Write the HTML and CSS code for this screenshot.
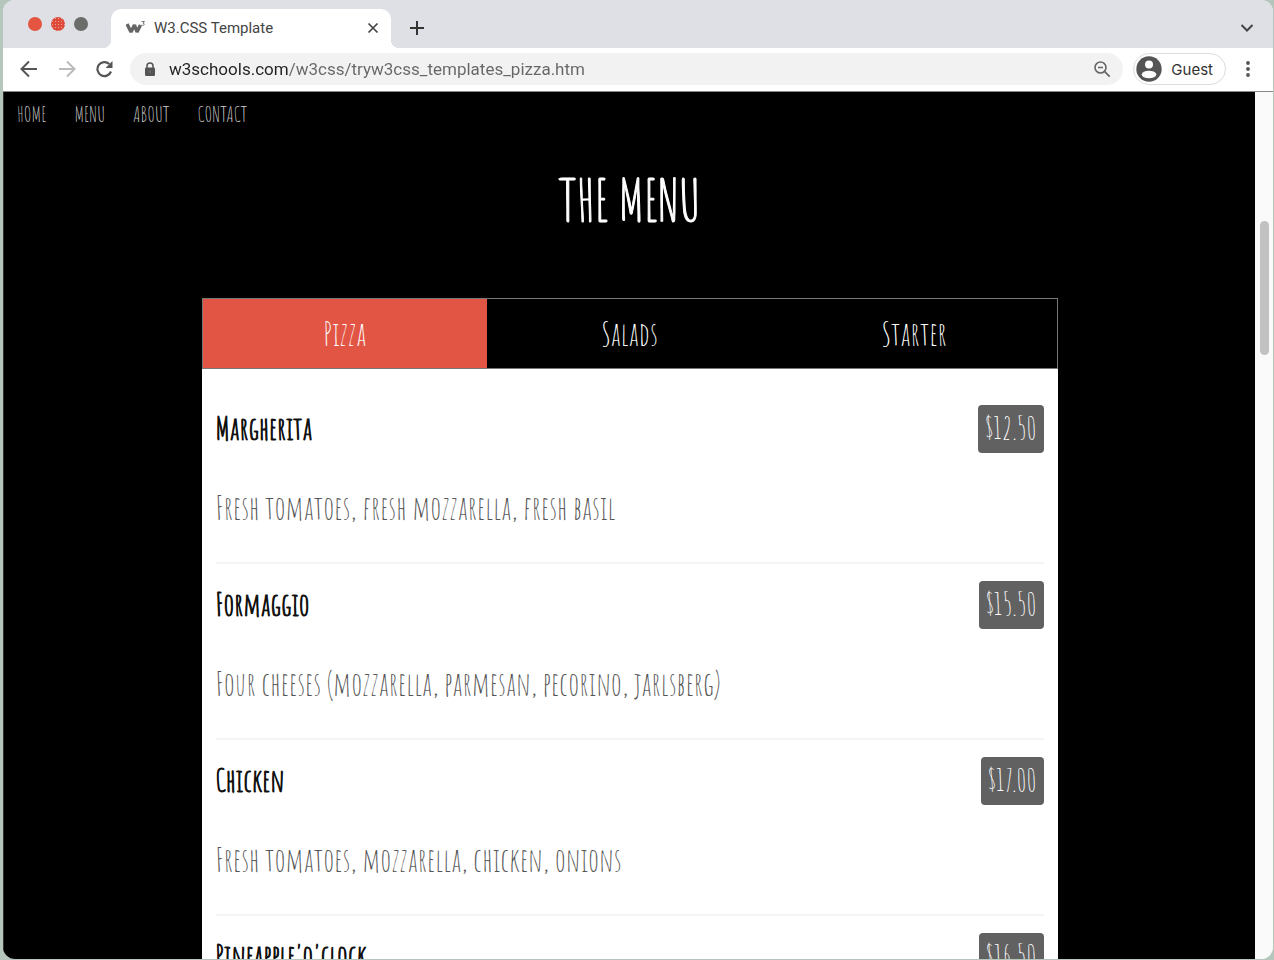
FILE: index.html
```html
<!DOCTYPE html>
<html lang="en">
<head>
<meta charset="utf-8">
<meta name="viewport" content="width=device-width, initial-scale=1">
<title>W3.CSS Template</title>
<link rel="stylesheet" href="styles.css">
</head>
<body>
<div class="window">
  <header class="tab-strip">
    <div class="lights">
      <button class="light" aria-label="Close window"></button>
      <button class="light light-dotted" aria-label="Minimize window"></button>
      <button class="light light-gray" aria-label="Zoom window"></button>
    </div>
    <div class="browser-tab">
      <svg class="favicon" viewBox="0 0 20 16" aria-hidden="true">
        <path d="M1 4 L5 12 L8.500 5 L11 12 L14.500 5" fill="none" stroke="#666" stroke-width="3.400" stroke-linejoin="bevel"/>
        <path d="M15.500 1.500 h3 l-1.500 1.700 c2.200 0 1.800 2.800 -1.500 1.900" fill="none" stroke="#777" stroke-width="1"/>
      </svg>
      <span class="tab-title">W3.CSS Template</span>
      <button class="icon-button close-tab" aria-label="Close tab">
        <svg width="12" height="12" viewBox="0 0 12 12"><path d="M1.500 1.500l9 9M10.500 1.500l-9 9" stroke="#444" stroke-width="1.700" fill="none"/></svg>
      </button>
    </div>
    <button class="icon-button new-tab" aria-label="New tab">
      <svg width="16" height="16" viewBox="0 0 16 16"><path d="M8 1v14M1 8h14" stroke="#333" stroke-width="2" fill="none"/></svg>
    </button>
    <button class="icon-button tab-search" aria-label="Search tabs">
      <svg width="14" height="10" viewBox="0 0 14 10"><path d="M1.500 2l5.500 5.500L12.500 2" stroke="#444" stroke-width="2" fill="none"/></svg>
    </button>
  </header>

  <div class="toolbar">
    <button class="icon-button" aria-label="Back">
      <svg width="18" height="18" viewBox="0 0 18 18"><path d="M17 9H2M9 1.500L1.500 9L9 16.500" stroke="#555" stroke-width="2" fill="none"/></svg>
    </button>
    <button class="icon-button" aria-label="Forward">
      <svg width="18" height="18" viewBox="0 0 18 18"><path d="M1 9h15M9 1.500L16.500 9L9 16.500" stroke="#bbb" stroke-width="2" fill="none"/></svg>
    </button>
    <button class="icon-button" aria-label="Reload">
      <svg width="18" height="18" viewBox="0 0 18 18"><path d="M15 11.500A7 7 0 1 1 13.300 4" stroke="#555" stroke-width="2.200" fill="none"/><path d="M16.500 1v7h-7z" fill="#555"/></svg>
    </button>
    <div class="address">
      <svg width="12" height="15" viewBox="0 0 12 15" aria-hidden="true"><rect x="1" y="5.500" width="10" height="8.500" rx="1.200" fill="#555"/><path d="M3 6V4a3 3 0 0 1 6 0v2" stroke="#555" stroke-width="1.500" fill="none"/><circle cx="6" cy="9.700" r="1" fill="#777"/></svg>
      <input class="url" type="text" aria-label="Address" value="w3schools.com/w3css/tryw3css_templates_pizza.htm">
      <button class="icon-button" aria-label="Page zoom">
        <svg width="18" height="18" viewBox="0 0 18 18"><circle cx="7.500" cy="7.500" r="5.500" stroke="#666" stroke-width="1.600" fill="none"/><path d="M5 7.500h5M11.700 11.700l5 5" stroke="#666" stroke-width="1.700" fill="none"/></svg>
      </button>
    </div>
    <button class="profile">
      <svg width="26" height="26" viewBox="0 0 26 26" aria-hidden="true"><circle cx="13" cy="13" r="12.700" fill="#555"/><circle cx="13" cy="8.500" r="4" fill="#fff"/><ellipse cx="13" cy="18.500" rx="7.300" ry="3.800" fill="#fff"/></svg>
      <span>Guest</span>
    </button>
    <button class="icon-button more" aria-label="More options">
      <svg width="6" height="18" viewBox="0 0 6 18"><circle cx="3" cy="3" r="1.900" fill="#555"/><circle cx="3" cy="9" r="1.900" fill="#555"/><circle cx="3" cy="15" r="1.900" fill="#555"/></svg>
    </button>
  </div>

  <div class="viewport">
    <main class="page">
      <nav class="site-nav">
        <a href="#home">HOME</a>
        <a href="#menu">MENU</a>
        <a href="#about">ABOUT</a>
        <a href="#contact">CONTACT</a>
      </nav>
      <section class="menu" id="menu">
        <h1 class="menu-heading">THE MENU</h1>
        <div class="menu-tabs" role="tablist">
          <button class="menu-tab menu-tab-active" role="tab" aria-selected="true">Pizza</button>
          <button class="menu-tab" role="tab" aria-selected="false">Salads</button>
          <button class="menu-tab" role="tab" aria-selected="false">Starter</button>
        </div>
        <div class="dishes" role="tabpanel">
          <article class="dish">
            <div class="dish-top"><h2 class="dish-name">Margherita</h2><span class="price">$12.50</span></div>
            <p class="dish-text">Fresh tomatoes, fresh mozzarella, fresh basil</p>
          </article>
          <article class="dish">
            <div class="dish-top"><h2 class="dish-name">Formaggio</h2><span class="price">$15.50</span></div>
            <p class="dish-text">Four cheeses (mozzarella, parmesan, pecorino, jarlsberg)</p>
          </article>
          <article class="dish">
            <div class="dish-top"><h2 class="dish-name">Chicken</h2><span class="price">$17.00</span></div>
            <p class="dish-text">Fresh tomatoes, mozzarella, chicken, onions</p>
          </article>
          <article class="dish">
            <div class="dish-top"><h2 class="dish-name">Pineapple'o'clock</h2><span class="price">$16.50</span></div>
          </article>
        </div>
      </section>
    </main>
    <div class="scrollbar"><div class="thumb"></div></div>
  </div>
</div>
</body>
</html>
```
FILE: styles.css
```css
* { box-sizing: border-box; }

body {
  margin: 0;
  height: 100vh;
  padding: 0 1px 1px 3px;
  overflow: hidden;
  background: #b5c7bd;
  font-family: Inter, Roboto, sans-serif;
}

button {
  margin: 0;
  padding: 0;
  border: 0;
  background: none;
  font: inherit;
  color: inherit;
}

svg { display: block; }

.window {
  display: flex;
  flex-direction: column;
  height: 100%;
  overflow: hidden;
  border-radius: 12px;
  background: #fff;
}

.tab-strip {
  display: flex;
  flex: none;
  align-items: center;
  height: 48px;
  padding-right: 19px;
  background: #dfe0e6;
}

.lights {
  display: flex;
  gap: 9px;
  align-self: flex-start;
  margin-top: 17px;
  padding: 0 23px 0 25px;
}

.light {
  width: 14px;
  height: 14px;
  border-radius: 50%;
  background: #e35441;
}

.light-dotted {
  background: radial-gradient(circle, #eea097 1px, transparent 1px) 0 0 / 3px 3px #de4b3b;
}

.light-gray { background: #6a6d6a; }

.browser-tab {
  position: relative;
  display: flex;
  align-items: center;
  align-self: flex-end;
  width: 280px;
  height: 39px;
  padding: 0 12px 2px 15px;
  border-radius: 10px 10px 0 0;
  background: #fff;
}

.browser-tab::before,
.browser-tab::after {
  content: "";
  position: absolute;
  bottom: 0;
  width: 8px;
  height: 8px;
}

.browser-tab::before {
  right: 100%;
  background: radial-gradient(circle at 0 0, transparent 8px, #fff 8px);
}

.browser-tab::after {
  left: 100%;
  background: radial-gradient(circle at 100% 0, transparent 8px, #fff 8px);
}

.favicon { width: 20px; height: 16px; }

.tab-title {
  flex: 1;
  padding-left: 8px;
  font-size: 15px;
  font-family: Roboto, Inter, sans-serif;
  color: #444;
}

.new-tab { margin: 8px 0 0 18px; }
.tab-search { margin: 8px 0 0 auto; }

.icon-button {
  display: grid;
  place-items: center;
  flex: none;
}

.toolbar {
  display: flex;
  flex: none;
  align-items: center;
  gap: 20px;
  height: 44px;
  padding: 0 22px 1px 17px;
  border-bottom: 1px solid #888;
  background: #fff;
}

.address {
  display: flex;
  flex: 1;
  align-items: center;
  height: 32px;
  margin-right: -10px;
  margin-left: -4px;
  padding: 0 12px 0 14px;
  border-radius: 16px;
  background: #f2f2f2;
}

.url {
  flex: 1;
  min-width: 0;
  height: 24px;
  margin: 0 12px 0 13px;
  padding: 0;
  border: 0;
  outline: 0;
  background: linear-gradient(90deg, #222 119px, #666 119px);
  background-clip: text;
  color: transparent;
  font: 17px/24px Roboto, Inter, sans-serif;
}

.profile {
  display: flex;
  align-items: center;
  gap: 9px;
  height: 32px;
  margin-right: -1px;
  padding: 0 12px 0 2px;
  border: 1px solid #ddd;
  border-radius: 16px;
  font-size: 15px;
  color: #333;
}

.viewport {
  display: flex;
  flex: 1;
  min-height: 0;
}

.page {
  flex: 1;
  overflow: hidden;
  border-left: 1px solid #333;
  background: #000;
  font-family: "Amatic SC", "DejaVu Sans Condensed", sans-serif;
}

.site-nav {
  display: flex;
  gap: 28px;
  padding: 10px 13px;
  font-size: 21px;
  line-height: 24px;
}

.site-nav a {
  color: #ccc;
  text-decoration: none;
}

.menu {
  max-width: 856px;
  margin: 0 auto;
}

.menu-heading {
  margin: 29px 0 63px;
  font-size: 56px;
  font-weight: 400;
  line-height: 70px;
  text-align: center;
  color: #fff;
  -webkit-text-stroke: 1px #fff;
}

.menu-tabs {
  display: grid;
  grid-template-columns: repeat(3, 1fr);
  border: 1px solid #777;
}

.menu-tab {
  height: 69px;
  font-size: 32px;
  color: #fff;
}

.menu-tab-active { background: #e25544; }

.dishes {
  padding: 36px 14px 0;
  background: #fff;
}

.dish {
  margin-bottom: 17px;
  padding-bottom: 30px;
  border-bottom: 2px solid #f4f4f4;
}

.dish-top {
  display: flex;
  align-items: center;
  justify-content: space-between;
  height: 48px;
}

.dish-name {
  margin: 0;
  font-size: 31px;
  font-weight: 400;
  line-height: 48px;
  color: #111;
  -webkit-text-stroke: 1px #111;
}

.price {
  padding: 0 7px;
  border-radius: 4px;
  background: #616161;
  font-size: 31px;
  line-height: 48px;
  color: #fff;
}

.dish-text {
  margin: 31px 0 0;
  font-size: 32px;
  line-height: 48px;
  color: #555;
}

.scrollbar {
  width: 18px;
  padding: 129px 4px 0 5px;
  background: #fafafa;
}

.thumb {
  height: 134px;
  border-radius: 5px;
  background: #c1c1c1;
}
```
